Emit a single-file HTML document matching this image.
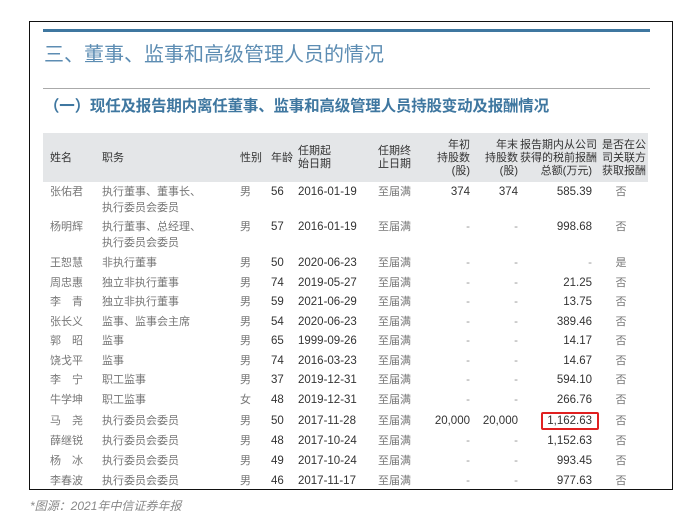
<!DOCTYPE html>
<html><head><meta charset="utf-8"><style>
body{margin:0;width:699px;height:527px;background:#fff;position:relative;overflow:hidden;font-family:"Liberation Sans","Noto Sans CJK SC",sans-serif}
.a{position:absolute;white-space:nowrap}
.box{position:absolute;left:29px;top:21px;width:644px;height:469px;border:1.5px solid #111;box-sizing:border-box}
.h{color:#333;font-size:11px;line-height:13px}
.c{color:#777;font-size:11px;line-height:14px}
.n{color:#333;font-size:11.5px;line-height:14px}
</style></head><body>
<div class="box"></div>
<div class="a" style="left:43px;top:29px;width:607px;height:3px;background:#3f77a0"></div>
<div class="a" style="left:44px;top:38px;font-size:20px;color:#5d8db3">三、董事、监事和高级管理人员的情况</div>
<div class="a" style="left:43px;top:88px;width:607px;height:1px;background:#aaa"></div>
<div class="a" style="left:44px;top:94px;font-size:15.5px;font-weight:bold;color:#3f77a0;letter-spacing:-0.2px">（一）现任及报告期内离任董事、监事和高级管理人员持股变动及报酬情况</div>
<div class="a" style="left:43px;top:133px;width:605px;height:49px;background:#e4e6e8"></div>
<div class="a h" style="left:50px;top:152px">姓名</div>
<div class="a h" style="left:102px;top:152px">职务</div>
<div class="a h" style="left:240px;top:152px">性别</div>
<div class="a h" style="left:271px;top:152px">年龄</div>
<div class="a h" style="left:298px;top:145px">任期起<br>始日期</div>
<div class="a h" style="left:378px;top:145px">任期终<br>止日期</div>
<div class="a h" style="left:430px;top:139px;width:40px;text-align:right">年初<br>持股数<br>(股)</div>
<div class="a h" style="left:478px;top:139px;width:40px;text-align:right">年末<br>持股数<br>(股)</div>
<div class="a h" style="left:520px;top:139px;width:72px;text-align:right">报告期内从公司<br>获得的税前报酬<br>总额(万元)</div>
<div class="a h" style="left:602px;top:139px;width:42px;text-align:center">是否在公<br>司关联方<br>获取报酬</div>
<div id="rows"></div>
<div class="a" style="left:541px;top:412px;width:58px;height:18px;border:2px solid #e02020;border-radius:2px;box-sizing:border-box"></div>
<div class="a" style="left:30px;top:497px;font-size:12px;color:#888;font-style:italic">*图源：2021年中信证券年报</div>
<script>
var R=[
[185,"张佑君","执行董事、董事长、<br>执行委员会委员","男","56","2016-01-19","374","374","585.39","否"],
[220,"杨明辉","执行董事、总经理、<br>执行委员会委员","男","57","2016-01-19","-","-","998.68","否"],
[256,"王恕慧","非执行董事","男","50","2020-06-23","-","-","-","是"],
[276,"周忠惠","独立非执行董事","男","74","2019-05-27","-","-","21.25","否"],
[295,"李　青","独立非执行董事","男","59","2021-06-29","-","-","13.75","否"],
[315,"张长义","监事、监事会主席","男","54","2020-06-23","-","-","389.46","否"],
[334,"郭　昭","监事","男","65","1999-09-26","-","-","14.17","否"],
[354,"饶戈平","监事","男","74","2016-03-23","-","-","14.67","否"],
[373,"李　宁","职工监事","男","37","2019-12-31","-","-","594.10","否"],
[393,"牛学坤","职工监事","女","48","2019-12-31","-","-","266.76","否"],
[414,"马　尧","执行委员会委员","男","50","2017-11-28","20,000","20,000","1,162.63","否"],
[434,"薛继锐","执行委员会委员","男","48","2017-10-24","-","-","1,152.63","否"],
[454,"杨　冰","执行委员会委员","男","49","2017-10-24","-","-","993.45","否"],
[474,"李春波","执行委员会委员","男","46","2017-11-17","-","-","977.63","否"]];
var h="";
R.forEach(function(r){var t=r[0];
h+='<div class="a c" style="left:50px;top:'+t+'px">'+r[1]+'</div>';
h+='<div class="a c" style="left:102px;top:'+t+'px;line-height:16px;margin-top:-1px">'+r[2]+'</div>';
h+='<div class="a c" style="left:240px;top:'+t+'px">'+r[3]+'</div>';
h+='<div class="a n" style="left:271px;top:'+t+'px">'+r[4]+'</div>';
h+='<div class="a n" style="left:298px;top:'+t+'px">'+r[5]+'</div>';
h+='<div class="a c" style="left:378px;top:'+t+'px">至届满</div>';
function rr(x,v){var col=v=="-"?"#999":"#333";h+='<div class="a n" style="left:'+(x-70)+'px;width:70px;text-align:right;color:'+col+';top:'+t+'px">'+v+'</div>';}
rr(470,r[6]);rr(518,r[7]);rr(592,r[8]);
h+='<div class="a c" style="left:602px;width:38px;text-align:center;top:'+t+'px">'+r[9]+'</div>';
});
document.getElementById("rows").innerHTML=h;
</script>
</body></html>
